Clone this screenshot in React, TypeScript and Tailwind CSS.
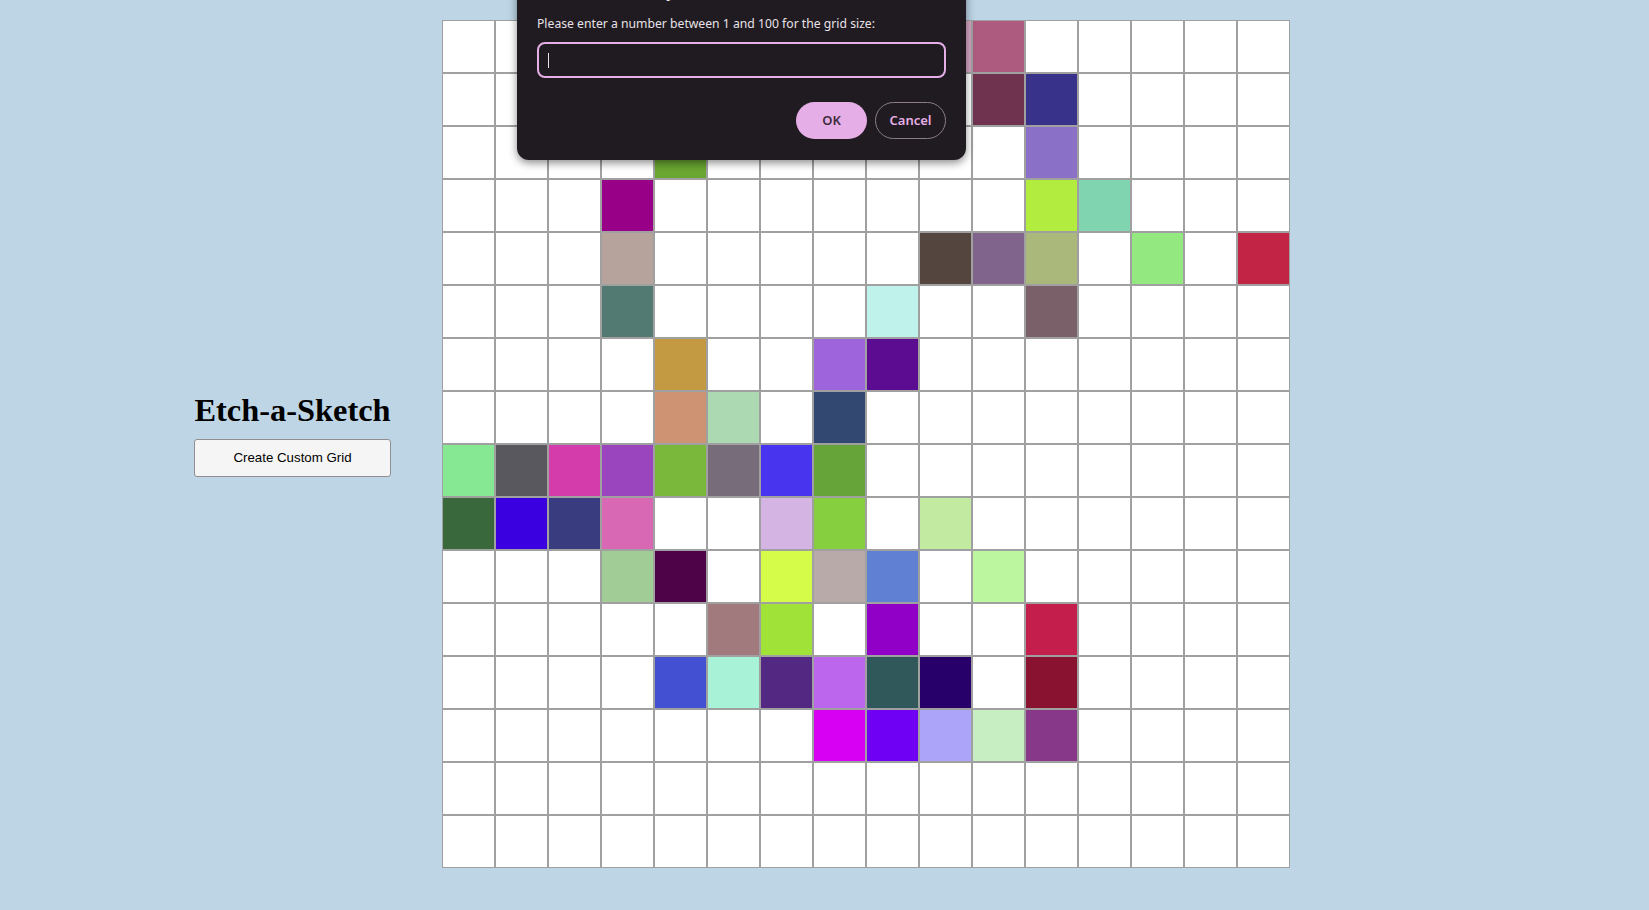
import React from "react";

const painted: Record<string, string> = {
  "0,9": "#d4a6c4", "0,10": "#ad5b7e",
  "1,10": "#6f3350", "1,11": "#38328a",
  "2,4": "#6aa632", "2,11": "#8a70c6",
  "3,3": "#990088", "3,11": "#b2ec3e", "3,12": "#80d4b0",
  "4,3": "#b6a39c", "4,9": "#54463e", "4,10": "#80648c", "4,11": "#aab87c", "4,13": "#94e880", "4,15": "#c22446",
  "5,3": "#527a72", "5,8": "#c0f2ec", "5,11": "#7a6068",
  "6,4": "#c39a42", "6,7": "#9e64dc", "6,8": "#5c0c90",
  "7,4": "#ce9372", "7,5": "#acd8b2", "7,7": "#324870",
  "8,0": "#86e892", "8,1": "#58585e", "8,2": "#d43cac", "8,3": "#9a44be", "8,4": "#7ab83c", "8,5": "#776c7a", "8,6": "#4834ee", "8,7": "#66a43a",
  "9,0": "#38683c", "9,1": "#3a00e0", "9,2": "#3a3c80", "9,3": "#d868b4", "9,6": "#d4b4e2", "9,7": "#86d040", "9,9": "#c2eaa0",
  "10,3": "#a2cc96", "10,4": "#4e0248", "10,6": "#d6fc4a", "10,7": "#b8aaa8", "10,8": "#6080d4", "10,10": "#bcf69e",
  "11,5": "#a07a7c", "11,6": "#a0e238", "11,8": "#9000c6", "11,11": "#c41e4c",
  "12,4": "#4450d2", "12,5": "#a8f2d8", "12,6": "#522882", "12,7": "#bc66ee", "12,8": "#30585a", "12,9": "#28006a", "12,11": "#881230",
  "13,7": "#d800f2", "13,8": "#7000f4", "13,9": "#aca4f8", "13,10": "#c6eec2", "13,11": "#883888",
};

const SIZE = 16;

function Grid() {
  const cells = [];
  for (let r = 0; r < SIZE; r++) {
    for (let c = 0; c < SIZE; c++) {
      const color = painted[`${r},${c}`] ?? "#ffffff";
      cells.push(
        <div
          key={`${r}-${c}`}
          className="border border-[#a0a0a0]"
          style={{ backgroundColor: color }}
        />
      );
    }
  }
  return (
    <div className="grid grid-cols-[repeat(16,53px)] grid-rows-[repeat(16,53px)] w-[848px] h-[848px] shrink-0">
      {cells}
    </div>
  );
}

function PromptDialog() {
  return (
    <div
      className="absolute left-[517px] top-[-39px] w-[449px] px-[20px] pt-[20px] pb-[21px] rounded-[12px] bg-[#201b20] shadow-[0_3px_8px_rgba(0,0,0,0.45)] text-[#e8e2e8]"
      style={{ fontFamily: '"Noto Sans", "Open Sans", sans-serif' }}
    >
      <div className="text-[16px] leading-[20px] h-[20px]">127.0.0.1:5500 says</div>
      <div className="mt-[15px] text-[12.2px] leading-[16px]">
        Please enter a number between 1 and 100 for the grid size:
      </div>
      <div className="mt-[10px] h-[36px] border-2 border-[#e6aee6] rounded-[8px] flex items-center pl-[9px]">
        <span className="w-px h-[15px] bg-[#e8e2e8]" />
      </div>
      <div className="mt-[24px] flex justify-end gap-[8px]">
        <button className="w-[71px] h-[37px] rounded-full bg-[#e6aee6] text-[#3e2c3e] text-[13px] font-semibold">
          OK
        </button>
        <button className="w-[71px] h-[37px] rounded-full border border-[#8a7c8a] text-[#e6aee6] text-[13px] font-semibold">
          Cancel
        </button>
      </div>
    </div>
  );
}

export default function App() {
  return (
    <div className="relative min-h-screen h-[910px] overflow-hidden bg-[#bdd5e5] flex items-start pl-[194px] pt-[20px] gap-[51px]">
      <div className="flex flex-col w-[197px] shrink-0 mt-[372px]">
        <h1
          className="text-[32.4px] leading-[37px] font-bold text-black text-center mb-[10px] whitespace-nowrap"
          style={{ fontFamily: '"Liberation Serif", serif' }}
        >
          Etch-a-Sketch
        </h1>
        <button
          className="h-[38px] w-full bg-[#f5f5f5] border border-[#8f8f8f] rounded-[3px] text-[13.3px] text-black"
          style={{ fontFamily: '"Liberation Sans", Arial, sans-serif' }}
        >
          Create Custom Grid
        </button>
      </div>
      <Grid />
      <PromptDialog />
    </div>
  );
}
